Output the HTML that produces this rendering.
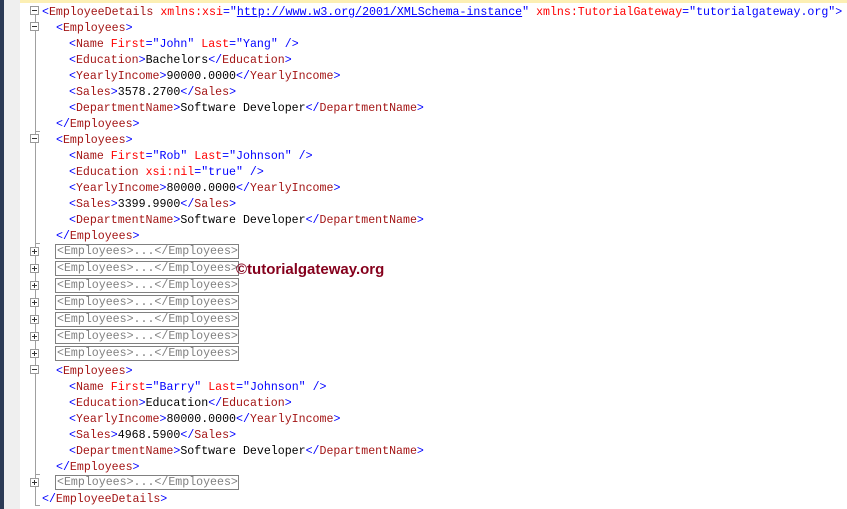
<!DOCTYPE html>
<html><head><meta charset="utf-8"><style>
html,body{margin:0;padding:0;width:847px;height:509px;overflow:hidden;background:#fff;position:relative}
.l{position:absolute;white-space:pre;font-family:"Liberation Mono",monospace;font-size:11.6px;line-height:16px;height:16px}
.b{color:#0000ff}.t{color:#a31515}.a{color:#ff0000}.k{color:#000}
.u{color:#0000ff;text-decoration:underline}
.c{color:#808080;border:1px solid #808080;height:15px;line-height:13px;padding:0 1px;box-sizing:border-box;width:184px}
.bx{position:absolute;left:30px;width:9px;height:9px;border:1px solid #999;background:#fff;box-sizing:border-box}
.bx:before{content:"";position:absolute;left:1px;top:3px;width:5px;height:1px;background:#333}
.p:after{content:"";position:absolute;left:3px;top:1px;width:1px;height:5px;background:#333}
.tk{position:absolute;left:35px;width:5px;height:1px;background:#a0a0a0}
#w{margin-top:2px}
</style></head><body>
<div style="position:absolute;left:0;top:0;width:4px;height:509px;background:#2b3a55"></div>
<div style="position:absolute;left:4px;top:0;width:16px;height:509px;background:#efefef"></div>
<div style="position:absolute;left:20px;top:0;width:827px;height:3px;background:#fcefb4"></div>
<div style="position:absolute;left:35px;top:15px;width:1px;height:490px;background:#a0a0a0"></div>
<div class="tk" style="top:131px"></div><div class="tk" style="top:243px"></div><div class="tk" style="top:474px"></div><div class="tk" style="top:505px"></div>

<div class="bx" style="top:6px"></div>
<div class="bx" style="top:22px"></div>
<div class="bx" style="top:134px"></div>
<div class="bx" style="top:365px"></div>
<div class="bx p" style="top:247px"></div>
<div class="bx p" style="top:264px"></div>
<div class="bx p" style="top:281px"></div>
<div class="bx p" style="top:298px"></div>
<div class="bx p" style="top:315px"></div>
<div class="bx p" style="top:332px"></div>
<div class="bx p" style="top:349px"></div>
<div class="bx p" style="top:478px"></div>

<div class="l" style="left:42px;top:5px"><span class="b">&lt;</span><span class="t">EmployeeDetails</span> <span class="a">xmlns:xsi</span><span class="b">="</span><span class="u">http://www.w3.org/2001/XMLSchema-instance</span><span class="b">"</span> <span class="a">xmlns:TutorialGateway</span><span class="b">="tutorialgateway.org"&gt;</span></div>
<div class="l" style="left:56px;top:21px"><span class="b">&lt;</span><span class="t">Employees</span><span class="b">&gt;</span></div>
<div class="l" style="left:69px;top:37px"><span class="b">&lt;</span><span class="t">Name</span> <span class="a">First</span><span class="b">="John"</span> <span class="a">Last</span><span class="b">="Yang" /&gt;</span></div>
<div class="l" style="left:69px;top:53px"><span class="b">&lt;</span><span class="t">Education</span><span class="b">&gt;</span>Bachelors<span class="b">&lt;/</span><span class="t">Education</span><span class="b">&gt;</span></div>
<div class="l" style="left:69px;top:69px"><span class="b">&lt;</span><span class="t">YearlyIncome</span><span class="b">&gt;</span>90000.0000<span class="b">&lt;/</span><span class="t">YearlyIncome</span><span class="b">&gt;</span></div>
<div class="l" style="left:69px;top:85px"><span class="b">&lt;</span><span class="t">Sales</span><span class="b">&gt;</span>3578.2700<span class="b">&lt;/</span><span class="t">Sales</span><span class="b">&gt;</span></div>
<div class="l" style="left:69px;top:101px"><span class="b">&lt;</span><span class="t">DepartmentName</span><span class="b">&gt;</span>Software Developer<span class="b">&lt;/</span><span class="t">DepartmentName</span><span class="b">&gt;</span></div>
<div class="l" style="left:56px;top:117px"><span class="b">&lt;/</span><span class="t">Employees</span><span class="b">&gt;</span></div>
<div class="l" style="left:56px;top:133px"><span class="b">&lt;</span><span class="t">Employees</span><span class="b">&gt;</span></div>
<div class="l" style="left:69px;top:149px"><span class="b">&lt;</span><span class="t">Name</span> <span class="a">First</span><span class="b">="Rob"</span> <span class="a">Last</span><span class="b">="Johnson" /&gt;</span></div>
<div class="l" style="left:69px;top:165px"><span class="b">&lt;</span><span class="t">Education</span> <span class="a">xsi:nil</span><span class="b">="true" /&gt;</span></div>
<div class="l" style="left:69px;top:181px"><span class="b">&lt;</span><span class="t">YearlyIncome</span><span class="b">&gt;</span>80000.0000<span class="b">&lt;/</span><span class="t">YearlyIncome</span><span class="b">&gt;</span></div>
<div class="l" style="left:69px;top:197px"><span class="b">&lt;</span><span class="t">Sales</span><span class="b">&gt;</span>3399.9900<span class="b">&lt;/</span><span class="t">Sales</span><span class="b">&gt;</span></div>
<div class="l" style="left:69px;top:213px"><span class="b">&lt;</span><span class="t">DepartmentName</span><span class="b">&gt;</span>Software Developer<span class="b">&lt;/</span><span class="t">DepartmentName</span><span class="b">&gt;</span></div>
<div class="l" style="left:56px;top:229px"><span class="b">&lt;/</span><span class="t">Employees</span><span class="b">&gt;</span></div>

<div class="l c" style="left:55px;top:244px">&lt;Employees&gt;...&lt;/Employees&gt;</div>
<div class="l c" style="left:55px;top:261px">&lt;Employees&gt;...&lt;/Employees&gt;</div>
<div class="l c" style="left:55px;top:278px">&lt;Employees&gt;...&lt;/Employees&gt;</div>
<div class="l c" style="left:55px;top:295px">&lt;Employees&gt;...&lt;/Employees&gt;</div>
<div class="l c" style="left:55px;top:312px">&lt;Employees&gt;...&lt;/Employees&gt;</div>
<div class="l c" style="left:55px;top:329px">&lt;Employees&gt;...&lt;/Employees&gt;</div>
<div class="l c" style="left:55px;top:346px">&lt;Employees&gt;...&lt;/Employees&gt;</div>

<div style="position:absolute;left:236px;top:261px;font-family:'Liberation Sans',sans-serif;font-weight:bold;font-size:15px;line-height:17px;color:#85001c;white-space:pre">©tutorialgateway.org</div>

<div class="l" style="left:56px;top:364px"><span class="b">&lt;</span><span class="t">Employees</span><span class="b">&gt;</span></div>
<div class="l" style="left:69px;top:380px"><span class="b">&lt;</span><span class="t">Name</span> <span class="a">First</span><span class="b">="Barry"</span> <span class="a">Last</span><span class="b">="Johnson" /&gt;</span></div>
<div class="l" style="left:69px;top:396px"><span class="b">&lt;</span><span class="t">Education</span><span class="b">&gt;</span>Education<span class="b">&lt;/</span><span class="t">Education</span><span class="b">&gt;</span></div>
<div class="l" style="left:69px;top:412px"><span class="b">&lt;</span><span class="t">YearlyIncome</span><span class="b">&gt;</span>80000.0000<span class="b">&lt;/</span><span class="t">YearlyIncome</span><span class="b">&gt;</span></div>
<div class="l" style="left:69px;top:428px"><span class="b">&lt;</span><span class="t">Sales</span><span class="b">&gt;</span>4968.5900<span class="b">&lt;/</span><span class="t">Sales</span><span class="b">&gt;</span></div>
<div class="l" style="left:69px;top:444px"><span class="b">&lt;</span><span class="t">DepartmentName</span><span class="b">&gt;</span>Software Developer<span class="b">&lt;/</span><span class="t">DepartmentName</span><span class="b">&gt;</span></div>
<div class="l" style="left:56px;top:460px"><span class="b">&lt;/</span><span class="t">Employees</span><span class="b">&gt;</span></div>
<div class="l c" style="left:55px;top:475px">&lt;Employees&gt;...&lt;/Employees&gt;</div>
<div class="l" style="left:42px;top:492px"><span class="b">&lt;/</span><span class="t">EmployeeDetails</span><span class="b">&gt;</span></div>
</body></html>
